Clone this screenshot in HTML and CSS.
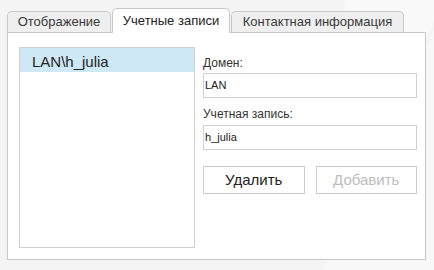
FILE: index.html
```html
<!DOCTYPE html>
<html lang="ru">
<head>
<meta charset="utf-8">
<link rel="stylesheet" href="styles.css">
</head>
<body>
<div class="page">
  <div class="tabs">
    <div class="tab tab-1">Отображение</div>
    <div class="tab tab-2 active">Учетные записи</div>
    <div class="tab tab-3">Контактная информация</div>
  </div>
  <div class="panel">
    <div class="list">
      <div class="item selected">LAN\h_julia</div>
    </div>
    <div class="form">
      <label class="label label-1">Домен:</label>
      <div class="input">LAN</div>
      <label class="label label-2">Учетная запись:</label>
      <div class="input">h_julia</div>
      <div class="buttons">
        <div class="btn">Удалить</div>
        <div class="btn disabled">Добавить</div>
      </div>
    </div>
  </div>
</div>
</body>
</html>
```
FILE: styles.css
```css
html, body {
  margin: 0;
  padding: 0;
}
body {
  width: 434px;
  height: 270px;
  overflow: hidden;
  font-family: "Liberation Sans", Arial, sans-serif;
  color: #333;
  background-color: #f4f4f4;
  background-image:
    radial-gradient(circle at 390px 10px, #f9f9f9 0 45px, transparent 46px),
    linear-gradient(115deg, transparent 0 80%, #f8f8f8 80% 100%);
}
.page {
  padding: 8px 8px 0 7px;
}
.tabs {
  display: flex;
  align-items: flex-end;
  gap: 1px;
  margin-bottom: -1px;
  position: relative;
  z-index: 1;
}
.tab {
  box-sizing: border-box;
  height: 21px;
  margin-bottom: 1px;
  border: 1px solid #c9c9c9;
  border-bottom: none;
  border-radius: 5px 5px 0 0;
  background: #efefef;
  font-size: 13px;
  line-height: 20px;
  text-align: center;
  color: #3a3a3a;
}
.tab-1 { width: 104px; }
.tab-2 { width: 118px; }
.tab-3 { width: 173px; }
.tab.active {
  height: 25px;
  margin-bottom: 0;
  background: #fff;
  line-height: 24px;
  color: #222;
}
.panel {
  box-sizing: border-box;
  height: 228px;
  border: 1px solid #c9c9c9;
  background: #fff;
  padding: 14px 8px 0 11px;
  display: flex;
  align-items: flex-start;
  gap: 8px;
}
.list {
  box-sizing: border-box;
  width: 176px;
  height: 201px;
  border: 1px solid #cfcfcf;
  flex-shrink: 0;
}
.item {
  box-sizing: border-box;
  height: 24px;
  padding: 3px 0 0 12px;
  font-size: 15px;
  line-height: 21px;
  color: #222;
}
.item.selected {
  background: #cfe8f6;
}
.form {
  flex: 1;
  display: flex;
  flex-direction: column;
}
.label {
  display: block;
  font-size: 12px;
  line-height: 14px;
  color: #333;
}
.label-1 { margin-top: 9px; margin-bottom: 3px; }
.label-2 { margin-top: 9px; margin-bottom: 4px; }
.input {
  box-sizing: border-box;
  height: 25px;
  border: 1px solid #d2d2d2;
  padding-left: 1px;
  font-size: 11px;
  line-height: 23px;
  color: #222;
  background: #fff;
}
.buttons {
  display: flex;
  gap: 11px;
  margin-top: 16px;
}
.btn {
  box-sizing: border-box;
  flex: 1;
  height: 28px;
  border: 1px solid #cccccc;
  background: #fff;
  font-size: 15px;
  line-height: 26px;
  text-align: center;
  color: #222;
}
.btn.disabled {
  color: #bdbdbd;
}
```
